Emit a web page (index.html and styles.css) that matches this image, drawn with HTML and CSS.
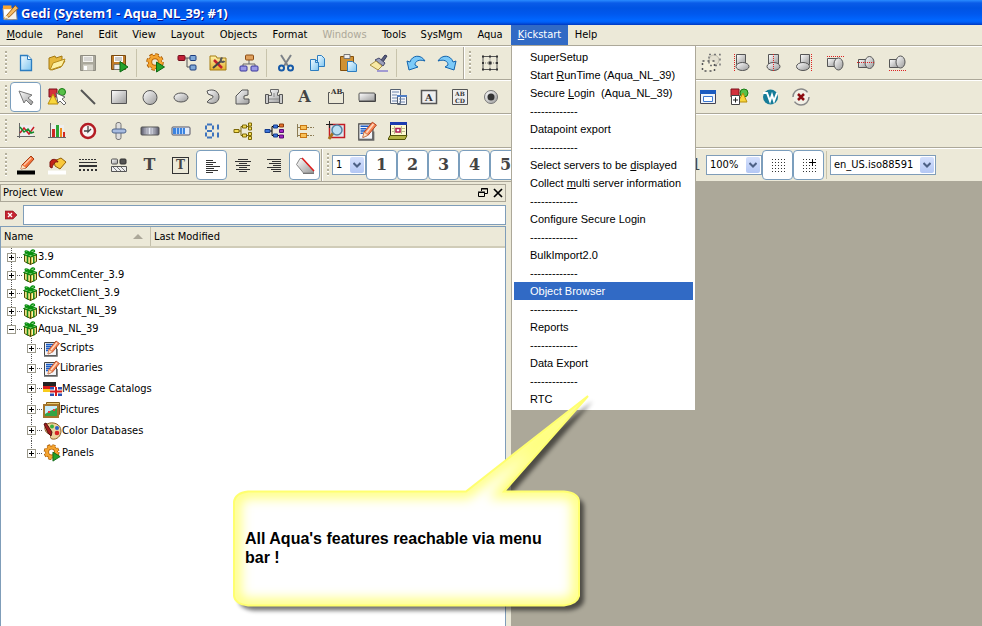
FILE: index.html
```
<!DOCTYPE html>
<html lang="en">
<head>
    <meta charset="utf-8">
    <title>Gedi (System1 - Aqua_NL_39; #1)</title>
    <link rel="stylesheet" href="styles.css">
</head>
<body>

<!-- shared gradients and icons used more than once -->
<svg class="defs" aria-hidden="true">
    <defs>
        <linearGradient id="grey" x1="0" y1="0" x2="1" y2="1"><stop offset="0" stop-color="#fff"/><stop offset="1" stop-color="#999"/></linearGradient>
        <linearGradient id="blue" x1="0" y1="0" x2="1" y2="1"><stop offset="0" stop-color="#f4fcff"/><stop offset="1" stop-color="#7cc4f0"/></linearGradient>
        <linearGradient id="gold" x1="0" y1="0" x2="0" y2="1"><stop offset="0" stop-color="#fff3a8"/><stop offset="1" stop-color="#e2ae2c"/></linearGradient>
        <linearGradient id="bar" x1="0" y1="0" x2="1" y2="0"><stop offset="0" stop-color="#556"/><stop offset=".5" stop-color="#eef2fa"/><stop offset="1" stop-color="#556"/></linearGradient>
    </defs>
    <symbol id="gear" viewBox="0 0 20 20">
        <circle cx="9" cy="9" r="7" fill="none" stroke="#a85a00" stroke-width="3.6" stroke-dasharray="3.2 2.3"/>
        <circle cx="9" cy="9" r="5" fill="none" stroke="#b96508" stroke-width="4.4"/>
        <circle cx="9" cy="9" r="6.6" fill="none" stroke="#f5a530" stroke-width="2.6" stroke-dasharray="2.8 2.4"/>
        <circle cx="9" cy="9" r="5" fill="none" stroke="#f5a530" stroke-width="2.6"/>
        <path d="M10.500 9v10l8-5z" fill="#25a32b" stroke="#0d6814"/>
    </symbol>
    <symbol id="script" viewBox="0 0 17 17">
        <path d="M1.500 2.500h12v13h-12z" fill="#f2f4f8" stroke="#444"/>
        <path d="M1 16h13V9" fill="none" stroke="#666" stroke-width="1.500"/>
        <path d="M3 4.500h7M3 6.500h5M3 8.500h4M3 10.500h2" stroke="#1c5cc4" stroke-width="1.300"/>
        <path d="M5 14l1-4.500L13 1l3.500 2.500L9.500 12z" fill="#f58553" stroke="#b23d1c" stroke-width=".8"/>
        <path d="M5 14l1-4.500 3.500 2.500z" fill="#ffe4c4" stroke="#c87850" stroke-width=".5"/>
        <path d="M8 10l6-7.500" stroke="#ffd8c0" stroke-width="1.500"/>
    </symbol>
    <symbol id="gift" viewBox="0 0 15 16">
        <path d="M1.500 5.500l6 2.500v7.500l-6-3zM7.500 8l6-2.500v7l-6 3z" fill="#e0c84c" stroke="#4c4c08"/>
        <path d="M3 7v5.500M6 8.500v5M9.500 8.500v5M12 7.500v5" stroke="#fbf6b8"/>
        <path d="M4.500 7v7.500M10.800 7.500v7" stroke="#14881c" stroke-width="1.500"/>
        <path d="M.5 5.500L7 3l7 2.500L7.500 8z" fill="#8cd07c" stroke="#087c0c"/>
        <path d="M4 6.500L10.500 4M4.500 4l6.500 2.500" stroke="#08900c" stroke-width="1.500"/>
        <path d="M7 4C4 1 1 1.500 2.500 3.500zM7.500 4c0-3.500 4.500-4 4-1.500z" fill="#d8f4c8" stroke="#089010" stroke-width="1.300"/>
    </symbol>
    <symbol id="chevron" viewBox="0 0 8 6"><path d="M.5 1L4 4.500 7.500 1" fill="none" stroke="#4d6185" stroke-width="2"/></symbol>
    <symbol id="tree" viewBox="0 0 20 20">
        <path d="M5 10h3M8 5.500v9M8 5.500h3M8 14.500h3M13 5.500h3M13 14.500h3" fill="none" stroke="currentColor"/>
    </symbol>
</svg>

<header class="titlebar">
    <svg class="app-icon" viewBox="0 0 18 18"><path d="M1 4h10v12H2z" fill="#fff" stroke="#999"/><path d="M1 1h9v4H1z" fill="#f6a534"/><path d="M4 16h12l-1-11z" fill="#f2f2ee" stroke="#888"/><path d="M2 15L14 1l3 3L8 13z" fill="#f4bc64" stroke="#9c5a10"/><path d="M2 15l2-4 3 3z" fill="#fff0d0"/></svg>
    <h1>Gedi (System1 - Aqua_NL_39; #1)</h1>
</header>

<nav class="menubar">
    <button><u>M</u>odule</button>
    <button>Panel</button>
    <button>Edit</button>
    <button>View</button>
    <button>Layout</button>
    <button>Objects</button>
    <button>Format</button>
    <button disabled>Windows</button>
    <button>Tools</button>
    <button>SysMgm</button>
    <button>Aqua</button>
    <div class="menu-holder">
        <button class="open"><u>K</u>ickstart</button>
        <div class="menu">
            <button>SuperSetup</button>
            <button>Start <u>R</u>unTime (Aqua_NL_39)</button>
            <button>Secure <u>L</u>ogin&nbsp; (Aqua_NL_39)</button>
            <span>-------------</span>
            <button>Datapoint export</button>
            <span>-------------</span>
            <button>Select servers to be <u>d</u>isplayed</button>
            <button>Collect <u>m</u>ulti server information</button>
            <span>-------------</span>
            <button>Configure Secure Login</button>
            <span>-------------</span>
            <button>BulkImport2.0</button>
            <span>-------------</span>
            <button class="current">Object Browser</button>
            <span>-------------</span>
            <button>Reports</button>
            <span>-------------</span>
            <button>Data Export</button>
            <span>-------------</span>
            <button>RTC</button>
        </div>
    </div>
    <button>Help</button>
</nav>

<!-- file / edit / align -->
<div class="toolbar">
    <i class="grip"></i>
    <button class="tool" aria-label="New"><svg viewBox="0 0 20 20"><path d="M4.500 2.500h7l4 4v11h-11z" fill="url(#blue)" stroke="#2c7dc0" stroke-width="1.300"/><path d="M11.500 2.500v4h4" fill="#fff" stroke="#2c7dc0"/></svg></button>
    <button class="tool" aria-label="Open"><svg viewBox="0 0 20 20"><path d="M2 16V5l6-2 1 2 6-2v4l3 1-4 6-9 3z" fill="#e6b83c" stroke="#a47912"/><path d="M3 17l3-7 12-4-3 7z" fill="#fdf0a4" stroke="#b88e1e"/></svg></button>
    <button class="tool" aria-label="Save"><svg viewBox="0 0 20 20"><path d="M2.500 2.500h15v15h-15z" fill="#aaa89c" stroke="#8f8d82"/><path d="M5 3h10v6H5z" fill="#f4f3ee"/><path d="M6 5h8M6 7h8" stroke="#bbb"/><path d="M5 11.500h10v6H5z" fill="#d6d4ca"/><path d="M6 13h3v4H6z" fill="#fff"/></svg></button>
    <button class="tool" aria-label="Save and run"><svg viewBox="0 0 20 20"><path d="M2.500 2.500h14v14h-14z" fill="#c07c28" stroke="#7a4a10"/><path d="M5 3h9v6H5z" fill="#fff"/><path d="M6 5h7M6 7h7" stroke="#999"/><path d="M5 11.500h8v5H5z" fill="#eee" stroke="#666" stroke-width=".7"/><path d="M11 8.500v10.500l8-5z" fill="#25a32b" stroke="#0d6814"/></svg></button>
    <i class="sep"></i>
    <button class="tool" aria-label="Run panel"><svg><use href="#gear"/></svg></button>
    <button class="tool" aria-label="Hierarchy"><svg viewBox="0 0 20 20"><path d="M6 5h7M10 5v9h4" fill="none" stroke="#555"/><rect x="1" y="2.500" width="7" height="5" rx="1" fill="#c32036" stroke="#700c1c"/><rect x="13" y="2.500" width="6" height="5" rx="1" fill="#7fa8d8" stroke="#1c3c7c"/><rect x="13" y="12" width="6" height="5" rx="1" fill="#7fa8d8" stroke="#1c3c7c"/></svg></button>
    <button class="tool" aria-label="Settings"><svg viewBox="0 0 20 20"><path d="M2 3h6l1 2h9v12H2z" fill="url(#gold)" stroke="#a67c12"/><path d="M6 7l8 8" stroke="#c2202c" stroke-width="2.500"/><path d="M13 8l-8 7" stroke="#444" stroke-width="2"/><path d="M14.500 5a2 2 0 1 0 2 3" fill="none" stroke="#555" stroke-width="2"/></svg></button>
    <button class="tool" aria-label="Structure"><svg viewBox="0 0 20 20"><path d="M10 6v5M4 14v-3h12v3" fill="none" stroke="#666"/><rect x="6.500" y="2" width="8" height="5" rx="1" fill="#dfa05c" stroke="#8c4c14"/><rect x="1" y="13" width="7" height="5" rx="1" fill="#9a98e4" stroke="#39369c"/><rect x="12" y="13" width="7" height="5" rx="1" fill="#9a98e4" stroke="#39369c"/></svg></button>
    <i class="sep"></i>
    <button class="tool" aria-label="Cut"><svg viewBox="0 0 20 20"><path d="M5 2l7 11M15 2L8 13" stroke="#7d8288" stroke-width="2"/><circle cx="5.500" cy="15" r="2.500" fill="none" stroke="#1559a8" stroke-width="2"/><circle cx="14.500" cy="15" r="2.500" fill="none" stroke="#1559a8" stroke-width="2"/></svg></button>
    <button class="tool" aria-label="Copy"><svg viewBox="0 0 20 20"><path d="M10.500 2.500h4l3 3v8h-7z" fill="url(#blue)" stroke="#2c7dc0"/><path d="M3.500 6.500h5l3 3v8h-8z" fill="url(#blue)" stroke="#2c7dc0"/><path d="M8.500 6.500v3h3" fill="none" stroke="#2c7dc0"/></svg></button>
    <button class="tool" aria-label="Paste"><svg viewBox="0 0 20 20"><path d="M2.500 3.500h13v14h-13z" fill="#d09234" stroke="#84500c"/><path d="M6 1.500h6v4H6z" fill="#eee" stroke="#777"/><path d="M9.500 8.500h5l4 3v7h-9z" fill="url(#blue)" stroke="#2c7dc0"/></svg></button>
    <button class="tool" aria-label="Format painter"><svg viewBox="0 0 20 20"><path d="M12 7l4-5 2 1-4 6z" fill="#5c6080" stroke="#333858"/><path d="M6 7l4-2 6 5-2 3z" fill="#9b9fbc" stroke="#44486a"/><path d="M1 12l6-4 6 5-4 4z" fill="#f8e9a4" stroke="#a89044"/><path d="M8 18h11" stroke="#8a80d0" stroke-width="1.500"/></svg></button>
    <i class="sep"></i>
    <button class="tool" aria-label="Undo"><svg viewBox="0 0 20 20"><path d="M1 8l2 9 9-3-3-2c0-4 4-6 10-4C15 1 6 2 4 9z" fill="#7ccaf8" stroke="#1464ac"/></svg></button>
    <button class="tool" aria-label="Redo"><svg viewBox="0 0 20 20"><path d="M19 8l-2 9-9-3 3-2c0-4-4-6-10-4C5 1 14 2 16 9z" fill="#7ccaf8" stroke="#1464ac"/></svg></button>
    <i class="break"></i>
    <i class="grip"></i>
    <button class="tool" aria-label="Select all"><svg viewBox="0 0 20 20"><path d="M3 3.500h14v13H3z" fill="none" stroke="#555"/><path d="M3 10h14M10 3.500v13" stroke="#777" stroke-dasharray="1 1"/><path d="M2 2.500h2v2H2zM9 2.500h2v2H9zM16 2.500h2v2h-2zM2 9h2v2H2zM8.500 8.500h3v3h-3zM16 9h2v2h-2zM2 15.500h2v2H2zM9 15.500h2v2H9zM16 15.500h2v2h-2z" fill="#333"/></svg></button>
    <i class="covered short"></i>
    <i class="sep"></i>
    <button class="tool" aria-label="Group"><svg viewBox="0 0 20 20"><circle cx="13" cy="7" r="5" fill="#e4e0d0" stroke="#c0bcac"/><path d="M2 8h11v9H2z" fill="#f4f0dc"/><path d="M8 1.500h11v11H8z" fill="none" stroke="#777" stroke-width="1.500" stroke-dasharray="2 3"/><path d="M1.500 8h12v10h-12z" fill="none" stroke="#555" stroke-width="1.500" stroke-dasharray="2 3"/></svg></button>
    <button class="tool" aria-label="Align left"><svg viewBox="0 0 20 20"><path d="M4.500 1.500h9v10h-9z" fill="url(#grey)" stroke="#555"/><ellipse cx="10.500" cy="13.500" rx="6.500" ry="4" fill="url(#grey)" stroke="#555"/><path d="M2.500 1v18" stroke="#d22" stroke-dasharray="1 1"/></svg></button>
    <button class="tool" aria-label="Align centre"><svg viewBox="0 0 20 20"><path d="M5.500 1.500h10v10h-10z" fill="url(#grey)" stroke="#555"/><ellipse cx="10.500" cy="13.500" rx="6.500" ry="4" fill="url(#grey)" stroke="#555"/><path d="M10.500 1v18" stroke="#d22" stroke-dasharray="1 1"/></svg></button>
    <button class="tool" aria-label="Align right"><svg viewBox="0 0 20 20"><path d="M6.500 1.500h9v10h-9z" fill="url(#grey)" stroke="#555"/><ellipse cx="9" cy="13.500" rx="6.500" ry="4" fill="url(#grey)" stroke="#555"/><path d="M17.500 1v18" stroke="#d22" stroke-dasharray="1 1"/></svg></button>
    <button class="tool" aria-label="Align top"><svg viewBox="0 0 20 20"><path d="M2.500 5.500h10v8h-10z" fill="url(#grey)" stroke="#555"/><ellipse cx="13.500" cy="11" rx="4.500" ry="6" fill="url(#grey)" stroke="#555"/><path d="M2 3.500h17" stroke="#d22" stroke-dasharray="1 1"/></svg></button>
    <button class="tool" aria-label="Align middle"><svg viewBox="0 0 20 20"><path d="M2.500 6.500h9v8h-9z" fill="url(#grey)" stroke="#555"/><ellipse cx="13.500" cy="9.500" rx="4.500" ry="6" fill="url(#grey)" stroke="#555"/><path d="M1 9.500h18" stroke="#d22" stroke-dasharray="1 1"/></svg></button>
    <button class="tool" aria-label="Align bottom"><svg viewBox="0 0 20 20"><path d="M2.500 6.500h9v8h-9z" fill="url(#grey)" stroke="#555"/><ellipse cx="13.500" cy="9" rx="4.500" ry="6" fill="url(#grey)" stroke="#555"/><path d="M2 17.500h17" stroke="#d22" stroke-dasharray="1 1"/></svg></button>
</div>

<!-- shapes and widgets -->
<div class="toolbar">
    <i class="grip"></i>
    <button class="tool on" aria-label="Pointer"><svg viewBox="0 0 20 20"><path d="M3 4l13 4-4 3 5 4-2 3-5-5-2 3z" fill="url(#grey)" stroke="#777"/></svg></button>
    <button class="tool" aria-label="Shapes"><svg viewBox="0 0 20 20"><path d="M2 2h8v8H2z" fill="#d3303c" stroke="#7c101c"/><circle cx="15" cy="5" r="3.500" fill="#58c048" stroke="#187c14"/><path d="M6 7l5 10H1z" fill="#f8d63c" stroke="#b88c08"/><path d="M9 6l9 4-3 2 4 4-2 2-4-4-2 2z" fill="#fff" stroke="#666"/></svg></button>
    <button class="tool" aria-label="Line"><svg viewBox="0 0 20 20"><path d="M3 3l14 14" stroke="#555" stroke-width="2"/></svg></button>
    <button class="tool" aria-label="Rectangle"><svg viewBox="0 0 20 20"><path d="M2.500 3.500h15v13h-15z" fill="url(#grey)" stroke="#555"/></svg></button>
    <button class="tool" aria-label="Circle"><svg viewBox="0 0 20 20"><circle cx="10" cy="10.500" r="7" fill="url(#grey)" stroke="#555"/></svg></button>
    <button class="tool" aria-label="Ellipse"><svg viewBox="0 0 20 20"><ellipse cx="10" cy="10.500" rx="7" ry="4.500" fill="url(#grey)" stroke="#555"/></svg></button>
    <button class="tool" aria-label="Arc"><svg viewBox="0 0 20 20"><path d="M5 4c7-3 12 1 12 6 0 6-7 8-12 5l3-3c2 0 3-1 3-3L6 7z" fill="url(#grey)" stroke="#555"/></svg></button>
    <button class="tool" aria-label="Polygon"><svg viewBox="0 0 20 20"><path d="M9 3h6v5l-4 1v3h5v4l-2 1H3v-8z" fill="url(#grey)" stroke="#555"/></svg></button>
    <button class="tool" aria-label="Pipe"><svg viewBox="0 0 20 20"><path d="M6.500 2.500h8v3h-1v3h4v7h-14v-7h4v-3h-1z" fill="url(#grey)" stroke="#666"/><path d="M1.500 7.500h3v9h-3zM15.500 7.500h3v9h-3z" fill="#ccc" stroke="#555"/><path d="M5 12h10M10 6v4" stroke="#888"/></svg></button>
    <button class="tool glyph">A</button>
    <button class="tool" aria-label="Frame"><svg viewBox="0 0 20 20"><path d="M4 5.500H2.500v11h15v-11H16" fill="none" stroke="#555"/><text x="5" y="7" class="tiny">AB</text></svg></button>
    <button class="tool" aria-label="Button"><svg viewBox="0 0 20 20"><rect x="2" y="6" width="16" height="8" rx="1" fill="url(#grey)" stroke="#555"/><path d="M2 14.500h16.500V7" fill="none" stroke="#444"/></svg></button>
    <button class="tool" aria-label="Combo"><svg viewBox="0 0 20 20"><path d="M2.500 2.500h10v14h-10zM9.500 8.500h9v9h-9z" fill="#f4f6fa" stroke="#556070"/><path d="M4 5h7M4 8h5M4 11h5M4 14h5M11 12h6M11 15h6" stroke="#6a83ac"/><path d="M9 8h10v2H9z" fill="#4f7dc4"/></svg></button>
    <button class="tool" aria-label="Text field"><svg viewBox="0 0 20 20"><path d="M2.500 3.500h15v13h-15z" fill="#eee" stroke="#555" stroke-width="1.500"/><text x="6" y="14" class="small">A</text></svg></button>
    <button class="tool" aria-label="Text edit"><svg viewBox="0 0 20 20"><path d="M2.500 2.500h15v15h-15z" fill="#eee" stroke="#555"/><text x="5" y="9" class="mini">AB</text><text x="5" y="16" class="mini">CD</text></svg></button>
    <button class="tool" aria-label="Radio"><svg viewBox="0 0 20 20"><circle cx="10" cy="10" r="6.500" fill="url(#grey)" stroke="#777"/><circle cx="10" cy="10" r="3.500" fill="#333"/></svg></button>
    <i class="covered"></i>
    <button class="tool" aria-label="Window"><svg viewBox="0 0 20 20"><path d="M2.500 3.500h15v13h-15z" fill="#eef4fc" stroke="#445"/><path d="M2 3h16v4H2z" fill="#1c5cc0"/><path d="M5.500 9.500h9v5h-9z" fill="#fff" stroke="#3c78d0"/></svg></button>
    <button class="tool" aria-label="Add shape"><svg viewBox="0 0 20 20"><path d="M2 2h8v8H2z" fill="#d3303c" stroke="#7c101c"/><circle cx="15" cy="6" r="4" fill="#58c048" stroke="#187c14"/><path d="M14 6l4 9H9z" fill="#f8d63c" stroke="#b88c08"/><path d="M2.500 8.500h8v9h-8z" fill="#fff" stroke="#444"/><path d="M4 13h5M6.500 10.500v5" stroke="#222"/></svg></button>
    <button class="tool" aria-label="Web"><svg viewBox="0 0 20 20"><circle cx="10.500" cy="10" r="7.500" fill="#167c98"/><path d="M3 6h4l3 8 2-6 2 6 3-8" fill="none" stroke="#fff" stroke-width="2"/></svg></button>
    <button class="tool" aria-label="ActiveX"><svg viewBox="0 0 20 20"><circle cx="10" cy="10" r="8" fill="#f2f0e6" stroke="#888" stroke-width="1.500" stroke-dasharray="20 5"/><path d="M7 7l6 6M13 7l-6 6" stroke="#8c0c10" stroke-width="2.500"/></svg></button>
</div>

<!-- trends and complex widgets -->
<div class="toolbar">
    <i class="grip"></i>
    <button class="tool" aria-label="Trend"><svg viewBox="0 0 20 20"><path d="M4 4h13v11H4z" fill="#eee"/><path d="M3.500 2v15M1 15.500h18" stroke="#666"/><path d="M4 12l4-5 5 6 5-7" fill="none" stroke="#c81c24" stroke-width="1.500"/><path d="M4 6l4 5 4-3 3 4 3-1" fill="none" stroke="#148c2c" stroke-width="1.500"/></svg></button>
    <button class="tool" aria-label="Bar chart"><svg viewBox="0 0 20 20"><path d="M4 4h13v12H4z" fill="#eee"/><path d="M3.500 2v15M1 16.500h18" stroke="#666"/><path d="M5 8h3v8H5z" fill="#d02824"/><path d="M9 4h3v12H9z" fill="#2ca434"/><path d="M13 7h2v9h-2z" fill="#f08c1c"/><path d="M16 11h2v5h-2z" fill="#d02824"/></svg></button>
    <button class="tool" aria-label="Clock"><svg viewBox="0 0 20 20"><circle cx="10" cy="10" r="7" fill="#f8f4f4" stroke="#b41c24" stroke-width="2.500"/><path d="M10 5v6l3-3M10 10H6" fill="none" stroke="#444" stroke-width="1.300"/></svg></button>
    <button class="tool" aria-label="Slider"><svg viewBox="0 0 20 20"><rect x="7" y="1.500" width="5" height="17" rx="2" fill="#ddd" stroke="#777"/><rect x="3" y="8" width="14" height="4" rx="2" fill="#a8bce0" stroke="#4f658c"/></svg></button>
    <button class="tool" aria-label="Thumb wheel"><svg viewBox="0 0 20 20"><rect x="1" y="6" width="18" height="8" rx="1" fill="url(#bar)" stroke="#555"/><path d="M5 7v6M8 7v6M11 7v6M14 7v6" stroke="#99a"/></svg></button>
    <button class="tool" aria-label="Progress"><svg viewBox="0 0 20 20"><rect x="1" y="6" width="18" height="8" rx="1" fill="#e4ecf8" stroke="#556"/><path d="M2 7h12v6H2z" fill="#3c84e0"/><path d="M5.500 7v6M8.500 7v6M11.500 7v6" stroke="#b4d4fc"/></svg></button>
    <button class="tool" aria-label="LCD"><svg viewBox="0 0 20 20"><path d="M5 3.500h5M5 10h5M5 16.500h5" stroke="#3e74bd" stroke-width="2"/><path d="M4 4.500v4M11 4.500v4M4 11.500v4M11 11.500v4M16 3.500v5M16 11.500v5" stroke="#3e74bd" stroke-width="2"/></svg></button>
    <button class="tool" aria-label="Tree"><svg class="olive" viewBox="0 0 20 20"><use href="#tree"/><path d="M1 8.500h5v3H1zM9.500 4h4v3h-4zM9.500 13h4v3h-4zM15.500 2h3v3h-3zM15.500 6h3v3h-3zM15.500 11.500h3v3h-3zM15.500 15.500h3v3h-3z" fill="#f4dc54" stroke="#7c6808"/></svg></button>
    <button class="tool" aria-label="Tree colours"><svg viewBox="0 0 20 20"><use href="#tree"/><path d="M1 8.500h5v3H1zM9.500 13h4v3h-4z" fill="#3c74d8" stroke="#143c8c"/><path d="M9.500 4h4v3h-4z" fill="#3c74d8" stroke="#143c8c"/><path d="M15.500 3h4v3h-4z" fill="#e4702c" stroke="#8c3c0c"/><path d="M15.500 8.500h4v3h-4zM15.500 14h4v3h-4z" fill="#a424c4" stroke="#540c74"/></svg></button>
    <button class="tool" aria-label="List"><svg viewBox="0 0 20 20"><path d="M2.500 3v13M2 6.500h4M2 14.500h4" fill="none" stroke="#8c7c54"/><path d="M12 6.500h7M12 14.500h7" stroke="#8c7c54" stroke-dasharray="2 1"/><rect x="5.500" y="4.500" width="6" height="4" fill="#f8c058" stroke="#c87814"/><rect x="5.500" y="12.500" width="6" height="4" fill="#f8c058" stroke="#c87814"/></svg></button>
    <button class="tool" aria-label="Zoom"><svg viewBox="0 0 20 20"><path d="M3.500 3.500h15v13h-15z" fill="#dce8f0" stroke="#c41c24" stroke-width="1.500"/><path d="M7 12l-4 6" stroke="#a8721c" stroke-width="3"/><circle cx="11" cy="9" r="5" fill="#bce0f4" stroke="#5484a4" stroke-width="1.500"/><path d="M3.500 0v7M0 3.500h7" stroke="#222"/></svg></button>
    <button class="tool" aria-label="Edit script"><svg><use href="#script"/></svg></button>
    <button class="tool" aria-label="Calendar"><svg viewBox="0 0 20 20"><path d="M2.500 1.500h16v13h-16z" fill="#fffbd0" stroke="#222"/><path d="M2 1h17v3H2z" fill="#1c3cb0"/><path d="M4 7.500h13M4 10.500h13M6.500 5v8M13.500 5v8" stroke="#bcb88c"/><path d="M8 7.500h4v3.500H8z" fill="#fff" stroke="#b01c54" stroke-width="1.500"/><path d="M2 14.500h17l-2 4H0z" fill="#b4b444" stroke="#545408"/></svg></button>
</div>

<!-- colours, line style, layers, zoom, language -->
<div class="toolbar">
    <i class="grip"></i>
    <button class="tool" aria-label="Line colour"><svg viewBox="0 0 20 20"><path d="M1 15.500h18v4H1z" fill="#000"/><path d="M5 14l1-4 9-9 3 3-8 9z" fill="#f4743c" stroke="#a83c10"/><path d="M8 10l7-7" stroke="#ffc8a8" stroke-width="1.500"/><path d="M5 14l1-4 4 3z" fill="#fce4c4"/></svg></button>
    <button class="tool" aria-label="Fill colour"><svg viewBox="0 0 20 20"><path d="M1 15.500h18v4H1z" fill="#fff"/><path d="M7 6l7-3 5 4-6 7-5-3z" fill="#f8c83c" stroke="#946008"/><path d="M3 12V7c2-4 7-3 8 0-3-1-5 2-6 6z" fill="#c42418" stroke="#7c100c"/></svg></button>
    <button class="tool" aria-label="Line style"><svg viewBox="0 0 20 20"><path d="M1 4.500h18" stroke="#333" stroke-dasharray="2 1"/><path d="M1 7.500h18" stroke="#333"/><path d="M1 11h18" stroke="#333" stroke-width="2"/><path d="M1 15h18" stroke="#333" stroke-width="2" stroke-dasharray="2 2"/></svg></button>
    <button class="tool" aria-label="Fill style"><svg viewBox="0 0 20 20"><rect x="2.500" y="4" width="6" height="5" rx="1" fill="url(#grey)" stroke="#555"/><rect x="11" y="4" width="6" height="5" rx="1" fill="#555" stroke="#333"/><path d="M2.500 11.500h15v5h-15z" fill="#eee" stroke="#555"/><path d="M4 12l4 4M8 12l4 4M12 12l4 4" stroke="#777"/></svg></button>
    <button class="tool glyph">T</button>
    <button class="tool glyph"><span class="framed">T</span></button>
    <button class="tool on" aria-label="Left"><svg viewBox="0 0 20 20"><path d="M4 5.500h7M4 7.500h10M4 9.500h7M4 11.500h14M4 13.500h8M4 15.500h12M4 17.500h7" stroke="#333"/></svg></button>
    <button class="tool" aria-label="Centre"><svg viewBox="0 0 20 20"><path d="M5 4.500h10M2 6.500h16M6 8.500h8M3 10.500h14M6 12.500h8M3 14.500h14M6 16.500h8" stroke="#333"/></svg></button>
    <button class="tool" aria-label="Right"><svg viewBox="0 0 20 20"><path d="M3 4.500h14M8 6.500h9M5 8.500h12M9 10.500h8M3 12.500h14M7 14.500h10M9 16.500h8" stroke="#333"/></svg></button>
    <button class="tool on" aria-label="Rotate"><svg viewBox="0 0 20 20"><path d="M1.500 9.500L5 3.500h2.500l11 12.500v2h-10z" fill="url(#grey)" stroke="#888"/><path d="M7 3l12 13" stroke="#e01c1c" stroke-width="1.500"/><path d="M8 18.500h11" stroke="#777"/></svg></button>
    <i class="break"></i>
    <i class="grip"></i>
    <label class="combo narrow"><select aria-label="Layer"><option>1</option></select><span><svg><use href="#chevron"/></svg></span></label>
    <button class="tool on glyph">1</button>
    <button class="tool on glyph">2</button>
    <button class="tool on glyph">3</button>
    <button class="tool on glyph">4</button>
    <button class="tool on glyph">5</button>
    <i class="covered less"></i>
    <button class="tool glyph ratio">1</button>
    <label class="combo"><select aria-label="Zoom"><option>100%</option></select><span><svg><use href="#chevron"/></svg></span></label>
    <button class="tool on" aria-label="Grid"><svg viewBox="0 0 20 20"><path d="M4 4.500h13M4 7.500h13M4 10.500h13M4 13.500h13M4 16.500h13" stroke="#333" stroke-dasharray="1 2"/></svg></button>
    <button class="tool on" aria-label="Snap to grid"><svg viewBox="0 0 20 20"><path d="M4 4.500h13M4 7.500h13M4 10.500h13M4 13.500h13M4 16.500h13" stroke="#333" stroke-dasharray="1 2"/><path d="M10 7.500h7M13.500 4v7" stroke="#000"/></svg></button>
    <i class="sep"></i>
    <label class="combo wide"><select aria-label="Language"><option>en_US.iso88591</option></select><span><svg><use href="#chevron"/></svg></span></label>
</div>

<main class="desktop">
    <section class="dock">
        <div class="dock-title">
            <h2>Project View</h2>
            <button aria-label="Float"><svg viewBox="0 0 10 10"><path d="M3.500 3V.5h6v5H7M3 1h7" fill="none" stroke="#000"/><path d="M.5 4.500h6v4h-6zM0 4h7" fill="none" stroke="#000"/></svg></button>
            <button aria-label="Close"><svg viewBox="0 0 10 10"><path d="M1 1l8 8M9 1L1 9" stroke="#000" stroke-width="1.700"/></svg></button>
        </div>
        <div class="search">
            <button aria-label="Clear"><svg viewBox="0 0 12 10"><path d="M0 1h8l4 4-4 4H0z" fill="#c42430" stroke="#84141c" stroke-width=".6"/><path d="M3 3l4 4M7 3L3 7" stroke="#fff" stroke-width="1.300"/></svg></button>
            <input type="text" aria-label="Filter">
        </div>
        <div class="tree-box">
            <div class="columns">
                <button>Name <svg viewBox="0 0 10 5"><path d="M0 5l5-5 5 5z" fill="#aca899"/></svg></button>
                <button>Last Modified</button>
            </div>
            <ul class="tree">
                <li><div class="row"><button class="plus" aria-label="Expand"></button><svg><use href="#gift"/></svg>3.9</div></li>
                <li><div class="row"><button class="plus" aria-label="Expand"></button><svg><use href="#gift"/></svg>CommCenter_3.9</div></li>
                <li><div class="row"><button class="plus" aria-label="Expand"></button><svg><use href="#gift"/></svg>PocketClient_3.9</div></li>
                <li><div class="row"><button class="plus" aria-label="Expand"></button><svg><use href="#gift"/></svg>Kickstart_NL_39</div></li>
                <li><div class="row"><button class="plus minus" aria-label="Collapse"></button><svg><use href="#gift"/></svg>Aqua_NL_39</div>
                    <ul>
                        <li><div class="row"><button class="plus" aria-label="Expand"></button><svg><use href="#script"/></svg>Scripts</div></li>
                        <li><div class="row"><button class="plus" aria-label="Expand"></button><svg><use href="#script"/></svg>Libraries</div></li>
                        <li><div class="row mid"><button class="plus" aria-label="Expand"></button><svg class="big" viewBox="0 0 19 16"><path d="M0 1h13v4H0z" fill="#222"/><path d="M0 5h13v3H0z" fill="#d81c1c"/><path d="M0 8h7v3H0z" fill="#f8cc1c"/><path d="M7 6h12v9H7z" fill="#2c50b0"/><path d="M13 6v9M7 10.500h12" stroke="#fff" stroke-width="4"/><path d="M13 6v9M7 10.500h12" stroke="#d81c1c" stroke-width="2"/></svg>Message Catalogs</div></li>
                        <li><div class="row mid"><button class="plus" aria-label="Expand"></button><svg viewBox="0 0 17 17"><path d="M3.500 1.500h13v12h-13z" fill="#e8c870" stroke="#845c14"/><path d="M1 4h14v12H1z" fill="#c8ecfc" stroke="#a4742c" stroke-width="2"/><path d="M2 13l5-3 7-3v8H2z" fill="#34a444"/><path d="M5 10h2v2H5zM10 8h2v2h-2z" fill="#e83c3c"/></svg>Pictures</div></li>
                        <li><div class="row mid"><button class="plus" aria-label="Expand"></button><svg class="big" viewBox="0 0 19 18"><path d="M4 2c6-3 14 0 14 7 0 5-4 9-9 8-3-1 0-4-3-5-4-1-6-8-2-10z" fill="#ecd49c" stroke="#8c6024"/><circle cx="9" cy="4.500" r="2" fill="#3cb03c"/><circle cx="14" cy="6" r="2" fill="#2c60c8"/><circle cx="14" cy="11" r="2.300" fill="#d82424"/><path d="M1 2l2-1 6 9-1 4-3-3z" fill="#a41c1c" stroke="#541010"/></svg>Color Databases</div></li>
                        <li><div class="row tall"><button class="plus" aria-label="Expand"></button><svg class="big"><use href="#gear"/></svg>Panels</div></li>
                    </ul>
                </li>
            </ul>
        </div>
    </section>
    <section class="workspace"></section>
</main>

<!-- yellow balloon pointing at the open menu -->
<aside class="callout">
    <svg viewBox="0 0 370 230">
        <defs>
            <path id="balloon" d="M18 100.500H236L358 5 274 100.500H334Q349 102 349 111V205Q347 213 334 214.500H18Q5 213 4 205V111Q5 102 18 100.500z"/>
            <clipPath id="inside"><use href="#balloon"/></clipPath>
            <filter id="soft" x="-10%" y="-10%" width="120%" height="120%"><feGaussianBlur stdDeviation="2"/></filter>
            <filter id="glow" x="-10%" y="-10%" width="120%" height="120%"><feGaussianBlur stdDeviation="6"/></filter>
        </defs>
        <use href="#balloon" transform="translate(5 5)" fill="#000" opacity=".55" filter="url(#soft)"/>
        <use href="#balloon" fill="#fff"/>
        <g clip-path="url(#inside)"><use href="#balloon" fill="none" stroke="#ffff80" stroke-width="14" filter="url(#glow)"/></g>
        <use href="#balloon" fill="none" stroke="#ffff70" stroke-width="2"/>
    </svg>
    <p>All Aqua's features reachable via menu bar !</p>
</aside>

</body>
</html>
```

FILE: styles.css
```
* {
    box-sizing: border-box;
}

html, body {
    height: 100%;
    margin: 0;
}

body {
    display: flex;
    flex-direction: column;
    overflow: hidden;
    background: #ece9d8;
    color: #000;
    font: 11px/20px "DejaVu Sans Condensed", "Noto Sans", sans-serif;
}

button, input, select {
    margin: 0;
    padding: 0;
    border: 0;
    background: none;
    color: inherit;
    font: inherit;
}

h1, h2, p, ul {
    margin: 0;
    padding: 0;
}

.defs {
    position: absolute;
    width: 0;
    height: 0;
}

/* title bar */
.titlebar {
    display: flex;
    flex: none;
    align-items: center;
    gap: 2px;
    height: 25px;
    padding-left: 2px;
    background: linear-gradient(#2a8cff 0, #0a5ce8 3px, #0054e3 8px, #0058ee 14px, #0066ff 20px, #0060f8 22px, #0038c0 25px);
}
.app-icon {
    width: 17px;
    height: 18px;
}
.titlebar h1 {
    color: #fff;
    font: bold 13px/20px "Noto Sans", sans-serif;
    text-shadow: 1px 1px #0f1089;
}

/* menu bar */
.menubar {
    display: grid;
    flex: none;
    grid-template-columns: 49px 42px 34px 38px 49px 53px 50px 59px 40px 55px 42px 57px 36px;
    height: 21px;
    border-bottom: 1px solid #aca899;
}
.menubar > button, .menu-holder > button {
    width: 100%;
    height: 20px;
    text-align: center;
}
.menubar button:disabled {
    color: #aca899;
}
.menu-holder {
    position: relative;
}
.menu-holder > .open {
    background: #316ac5;
    color: #fff;
}
.menu {
    position: absolute;
    z-index: 5;
    top: 21px;
    left: 1px;
    display: flex;
    flex-direction: column;
    width: 183px;
    padding: 2px;
    background: #fff;
    box-shadow: -1px 0 #aca899, 1px 0 #aca899;
    font-family: "Liberation Sans", sans-serif;
}
.menu > * {
    height: 18px;
    padding-left: 16px;
    line-height: 18px;
    text-align: left;
    white-space: nowrap;
}
.menu .current {
    background: #316ac5;
    color: #fff;
}

/* tool bars */
.toolbar {
    display: flex;
    flex: none;
    align-items: center;
    height: 34px;
    padding-left: 5px;
    border-top: 1px solid #fff;
    border-bottom: 1px solid #aca899;
}
.grip {
    flex: none;
    width: 2px;
    height: 24px;
    margin-right: 3px;
    background: repeating-linear-gradient(#b4b09c 0 2px, #fff 2px 3px, transparent 3px 4px);
}
.sep {
    flex: none;
    width: 6px;
    height: 28px;
    background: linear-gradient(90deg, transparent 2px, #c8c4ac 2px 3px, transparent 3px);
}
.break {
    flex: none;
    width: 7px;
    height: 32px;
    background: linear-gradient(90deg, transparent 1px, #aca899 1px 2px, #fff 2px 3px, transparent 3px);
}
.covered {
    flex: none;
    width: 186px;
}
.covered.short {
    width: 184px;
}
.covered.less {
    width: 154px;
}
.tool {
    display: flex;
    flex: none;
    align-items: center;
    justify-content: center;
    width: 31px;
    height: 30px;
}
.tool svg {
    width: 20px;
    height: 20px;
}
.tool.on {
    border: 1px solid #7b9ebd;
    border-radius: 4px;
    background: #fff;
}
.tool.glyph {
    color: #444;
    font: bold 16px/20px "DejaVu Serif", serif;
}
.tool.ratio {
    justify-content: flex-end;
    padding-right: 5px;
}
.framed {
    width: 17px;
    height: 17px;
    border: 1px solid #333;
    font-size: 12px;
    line-height: 15px;
}
.tiny {
    font: bold 7px "DejaVu Serif", serif;
    fill: #333;
}
.mini {
    font: bold 6px "DejaVu Serif", serif;
    fill: #333;
}
.small {
    font: bold 10px "DejaVu Serif", serif;
    fill: #333;
}
.olive {
    color: #7c6808;
}
.combo {
    display: flex;
    flex: none;
    width: 56px;
    height: 20px;
    padding: 1px;
    border: 1px solid #7f9db9;
    background: #fff;
}
.combo.narrow {
    width: 34px;
}
.combo.wide {
    width: 106px;
}
.combo select {
    flex: 1;
    min-width: 0;
    padding-left: 2px;
    appearance: none;
    line-height: 16px;
}
.combo span {
    display: flex;
    flex: none;
    align-items: center;
    justify-content: center;
    width: 14px;
    border-radius: 2px;
    background: linear-gradient(#d4e0fc, #b4c8f4);
}
.combo span svg {
    width: 8px;
    height: 6px;
}

/* project view */
.desktop {
    display: flex;
    flex: 1;
    min-height: 0;
}
.dock {
    display: flex;
    flex: 0 0 52%;
    flex-direction: column;
    padding: 2px 5px 0 0;
}
.workspace {
    flex: 1;
    background: #aca899;
}
.dock-title {
    display: flex;
    align-items: center;
    gap: 5px;
    height: 18px;
    padding: 0 2px;
    border: 1px solid #aca899;
}
.dock-title h2 {
    flex: 1;
    font: inherit;
}
.dock-title button {
    display: flex;
}
.dock-title svg {
    width: 10px;
    height: 10px;
}
.search {
    display: flex;
    align-items: center;
    gap: 6px;
    padding: 3px 0 0 5px;
}
.search button {
    display: flex;
}
.search svg {
    width: 12px;
    height: 10px;
}
.search input {
    flex: 1;
    height: 20px;
    padding: 0 3px;
    border: 1px solid #7f9db9;
    background: #fff;
}
.tree-box {
    flex: 1;
    margin-top: 1px;
    border: 1px solid #7f9db9;
    border-bottom: 0;
    background: #fff;
}
.columns {
    display: flex;
    height: 21px;
    border-bottom: 2px solid #d0ccb8;
    background: #ece9d8;
}
.columns button {
    display: flex;
    align-items: center;
    justify-content: space-between;
    padding: 0 7px 0 3px;
}
.columns button:first-child {
    width: 150px;
    border-right: 1px solid #c4c0ac;
}
.columns svg {
    width: 10px;
    height: 5px;
}
.tree, .tree ul {
    list-style: none;
}
.tree {
    padding-left: 6px;
}
.tree ul {
    padding-left: 20px;
}

/* dotted guide runs through the middle of the expander */
.tree li {
    background: repeating-linear-gradient(#555 0 1px, transparent 1px 2px) 4px 0 / 1px 100% no-repeat;
}
.tree > li:last-child {
    background-size: 1px 9px;
}
.tree ul li:last-child {
    background-size: 1px 12px;
}
.row {
    display: flex;
    align-items: center;
    height: 18px;
    background: repeating-linear-gradient(90deg, #555 0 1px, transparent 1px 2px) 10px center / 5px 1px no-repeat;
}
.row svg {
    flex: none;
    width: 15px;
    height: 16px;
}
.tree ul .row {
    height: 20px;
}
.tree ul .mid {
    height: 21px;
}
.tree ul .tall {
    height: 24px;
}
.tree ul svg {
    width: 17px;
    height: 17px;
}
.tree ul svg.big {
    width: 19px;
    height: 18px;
}
.plus {
    width: 9px;
    height: 9px;
    margin-right: 7px;
    border: 1px solid #9c9a8c;
    background:
        linear-gradient(#000, #000) center / 5px 1px no-repeat,
        linear-gradient(#000, #000) center / 1px 5px no-repeat,
        #fff;
}
.minus {
    background: linear-gradient(#000, #000) center / 5px 1px no-repeat, #fff;
}

/* balloon */
.callout {
    position: absolute;
    z-index: 10;
    top: 391px;
    left: 230px;
    width: 370px;
    padding: 138px 50px 0 15px;
    font: bold 16px/19px "Liberation Sans", sans-serif;
}
.callout svg {
    position: absolute;
    top: 0;
    left: 0;
    width: 370px;
    height: 230px;
}
.callout p {
    position: relative;
}
```
